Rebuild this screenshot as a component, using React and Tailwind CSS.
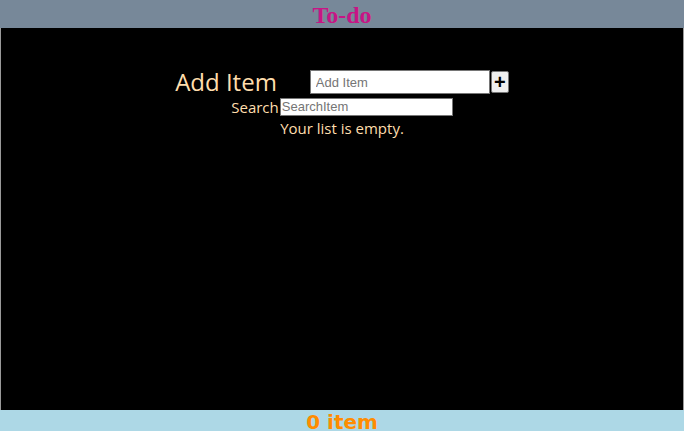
export default function App() {
  return (
    <div className="flex h-[431px] w-full flex-col overflow-hidden bg-black">
      <header className="flex h-[28px] items-center justify-center bg-[#778899]">
        <h1 className="mt-[2px] text-[24px] font-bold leading-none text-[#c71585] [font-family:'Liberation_Serif',serif]">
          To-do
        </h1>
      </header>

      <main className="flex h-[382px] flex-col items-center border-x border-[#9a9a9a] pt-[39px] text-[#ffdead] [font-family:'Open_Sans',sans-serif]">
        <div className="flex items-center">
          <label className="mr-[33px] text-[24px] leading-[30px]">Add Item</label>
          <input
            type="text"
            placeholder="Add Item"
            className="h-[24px] w-[180px] border border-[#767676] bg-white px-[5px] text-[13px] text-black placeholder:text-[#757575] [font-family:'Liberation_Sans',sans-serif]"
          />
          <button className="ml-[1px] flex h-[22px] w-[18px] items-center justify-center rounded-[2px] border border-[#767676] bg-[#efefef] text-[20px] font-bold leading-none text-black [font-family:'Liberation_Sans',sans-serif]">
            +
          </button>
        </div>

        <div className="flex items-center">
          <label className="mr-px text-[15px] leading-[20px]">Search</label>
          <input
            type="text"
            placeholder="SearchItem"
            className="h-[18px] w-[173px] border border-[#767676] bg-white px-px text-[13px] text-black placeholder:text-[#757575] [font-family:'Liberation_Sans',sans-serif]"
          />
        </div>

        <p className="mt-px text-[15px] leading-[20px]">Your list is empty.</p>
      </main>

      <footer className="flex h-[21px] justify-center overflow-hidden bg-[#add8e6]">
        <span className="text-[20px] font-bold leading-[24px] text-[#ff8c00] [font-family:'DejaVu_Sans',sans-serif]">
          0 item
        </span>
      </footer>
    </div>
  );
}
